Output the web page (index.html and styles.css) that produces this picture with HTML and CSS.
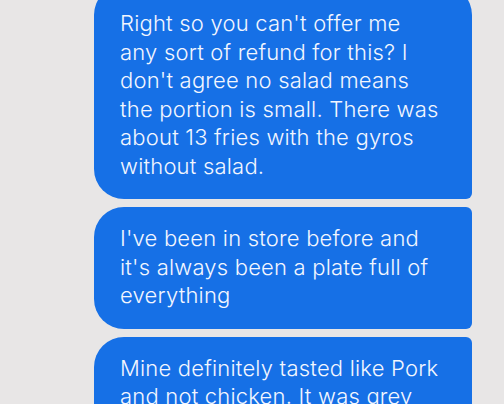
FILE: index.html
```html
<!DOCTYPE html>
<html lang="en">
<head>
  <meta charset="UTF-8">
  <meta name="viewport" content="width=device-width, initial-scale=1.0">
  <title>Messages</title>
<link rel="stylesheet" href="styles.css">
</head>
<body>
  <main class="thread">
    <div class="bubble first">
      <p>Right so you can't offer me any sort of refund for this? I don't agree no salad means the portion is small. There was about 13 fries with the gyros without salad.</p>
    </div>
    <div class="bubble">
      <p>I've been in store before and it's always been a plate full of everything</p>
    </div>
    <div class="bubble">
      <p>Mine definitely tasted like Pork and not chicken. It was grey and chewy</p>
    </div>
  </main>
</body>
</html>
```

FILE: styles.css
```css
body {
  font-family: Inter, "Open Sans", sans-serif;
  margin: 0;
  padding: 0;
  background-color: #e8e6e6;
  overflow: hidden;
}

.thread {
  display: flex;
  flex-direction: column;
  gap: 8px;
  padding: 0 32px 0 94px;
  margin-top: -15px;
}

.bubble {
  background-color: #1670e6;
  color: #f2f6ff;
  border-radius: 30px 6px 6px 30px;
  padding: 17px 20px 19px 26px;
}

.bubble.first {
  border-radius: 30px 30px 6px 30px;
  padding-top: 24px;
  padding-right: 30px;
}

.bubble p {
  margin: 0;
  font-size: 22px;
  font-weight: 300;
  line-height: 28.5px;
  letter-spacing: 0.2px;
}
```
